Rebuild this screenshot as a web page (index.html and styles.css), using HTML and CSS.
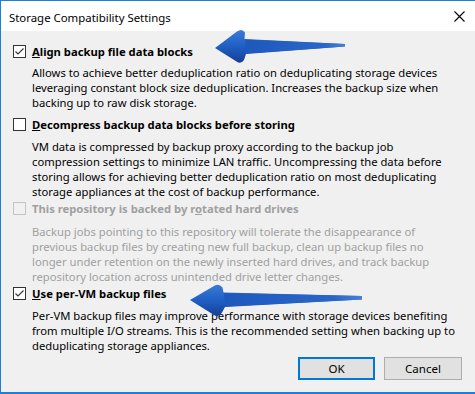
FILE: index.html
```html
<!DOCTYPE html>
<html>
<head>
<meta charset="utf-8">
<link rel="stylesheet" href="styles.css">
</head>
<body>
<div class="window">
  <div class="titlebar">
    <span class="title">Storage Compatibility Settings</span>
    <svg class="close" width="11" height="11" viewBox="0 0 11 11"><path d="M0.5 0.5L10.5 10.5M10.5 0.5L0.5 10.5" stroke="#000" stroke-width="1.1" fill="none"/></svg>
  </div>
  <div class="content">
    <div class="opt opt1">
      <div class="row">
        <span class="cb"><svg width="11" height="11" viewBox="0 0 11 11"><path d="M1.5 5.5L4 8L9.5 2.5" stroke="#333" stroke-width="1.1" fill="none"/></svg></span>
        <span class="label"><u>A</u>lign backup file data blocks</span>
      </div>
      <p class="desc">Allows to achieve better deduplication ratio on deduplicating storage devices<br>leveraging constant block size deduplication. Increases the backup size when<br>backing up to raw disk storage.</p>
    </div>
    <div class="opt opt2">
      <div class="row">
        <span class="cb"></span>
        <span class="label"><u>D</u>ecompress backup data blocks before storing</span>
      </div>
      <p class="desc">VM data is compressed by backup proxy according to the backup job<br>compression settings to minimize LAN traffic. Uncompressing the data before<br>storing allows for achieving better deduplication ratio on most deduplicating<br>storage appliances at the cost of backup performance.</p>
    </div>
    <div class="opt opt3 disabled">
      <div class="row">
        <span class="cb"></span>
        <span class="label">This repository is backed by r<u>o</u>tated hard drives</span>
      </div>
      <p class="desc">Backup jobs pointing to this repository will tolerate the disappearance of<br>previous backup files by creating new full backup, clean up backup files no<br>longer under retention on the newly inserted hard drives, and track backup<br>repository location across unintended drive letter changes.</p>
    </div>
    <div class="opt opt4">
      <div class="row">
        <span class="cb"><svg width="11" height="11" viewBox="0 0 11 11"><path d="M1.5 5.5L4 8L9.5 2.5" stroke="#333" stroke-width="1.1" fill="none"/></svg></span>
        <span class="label"><u>U</u>se per-VM backup files</span>
      </div>
      <p class="desc">Per-VM backup files may improve performance with storage devices benefiting<br>from multiple I/O streams. This is the recommended setting when backing up to<br>deduplicating storage appliances.</p>
    </div>
    <div class="buttons">
      <button class="btn btn-default">OK</button>
      <button class="btn">Cancel</button>
    </div>
  </div>
  <svg class="arrows" width="475" height="394" viewBox="0 0 475 394">
    <defs>
      <linearGradient id="g1" x1="0" y1="0" x2="0" y2="1">
        <stop offset="0" stop-color="#3b7ad6"/>
        <stop offset="0.5" stop-color="#1f5fc4"/>
        <stop offset="1" stop-color="#173f94"/>
      </linearGradient>
      <linearGradient id="g2" x1="0" y1="0" x2="1" y2="0">
        <stop offset="0" stop-color="#1e58bd" stop-opacity="1"/>
        <stop offset="0.8" stop-color="#2a66c8" stop-opacity="1"/>
        <stop offset="1" stop-color="#4f86d8" stop-opacity="0.8"/>
      </linearGradient>
    </defs>
    <path d="M215 48 L237 31.5 Q242 28 245 32.5 L244.5 39 L345 44 L345 46.5 L246 54 L244 60 Q241 64.5 236.5 61.5 Z" fill="url(#g1)"/>
    <path d="M245 39.5 L345 44 L345 46.5 L246 53.5 Z" fill="url(#g2)"/>
    <path d="M190 300 L214 286 Q219 283 222.5 287.5 L223.5 292.5 L362 296 L362 299.5 L225 307 L222 312.5 Q218.5 318 214 315 Z" fill="url(#g1)"/>
    <path d="M224 293 L362 296 L362 299.5 L225 306.5 Z" fill="url(#g2)"/>
  </svg>
</div>
</body>
</html>
```
FILE: styles.css
```css
* { box-sizing: border-box; }
html, body { margin: 0; padding: 0; }
body {
  width: 475px;
  height: 394px;
  overflow: hidden;
  font-family: "Noto Sans", "Open Sans", sans-serif;
  font-size: 11.25px;
  color: #000;
  background: #f0f0f0;
}
.window {
  position: relative;
  width: 475px;
  height: 394px;
  border-top: 1px solid #1a80d8;
  border-left: 1px solid #1a80d8;
  border-bottom: 2px solid #1a80d8;
  display: flex;
  flex-direction: column;
  background: #f0f0f0;
}
.titlebar {
  height: 30px;
  background: #fff;
  display: flex;
  align-items: center;
  justify-content: space-between;
  padding: 0 10px 0 8px;
  flex: none;
}
.title { font-size: 11.4px; line-height: 15px; padding-top: 2px; }
.close { margin-top: 0; }
.content {
  flex: 1;
  padding: 13px 13px 0 12px;
  display: flex;
  flex-direction: column;
}
.row {
  display: flex;
  align-items: center;
  gap: 6px;
  line-height: 15px;
  height: 15px;
}
.cb {
  width: 13px;
  height: 13px;
  border: 1px solid #333;
  background: #fff;
  display: flex;
  align-items: center;
  justify-content: center;
  flex: none;
}
.label { font-weight: bold; white-space: nowrap; }
.desc {
  margin: 6px 0 0 19px;
  line-height: 15px;
  white-space: nowrap;
}
.opt2 { margin-top: 7px; }
.opt2 .desc { margin-top: 7px; }
.opt3 { margin-top: 2px; }
.opt3 .desc { margin-top: 8px; }
.opt4 { margin-top: 2px; }
.opt4 .desc { margin-top: 7px; }
.disabled { color: #a0a0a0; }
.disabled .cb { border-color: #c4c4c4; background: #f0f0f0; }
.buttons {
  display: flex;
  justify-content: flex-end;
  gap: 9px;
  margin-top: 4px;
}
.btn {
  font-family: inherit;
  font-size: 11.5px;
  height: 23px;
  width: 78px;
  background: #e1e1e1;
  border: 1px solid #adadad;
  color: #000;
  padding: 0;
  line-height: 15px;
}
.btn-default { border: 2px solid #0078d7; width: 77px; }
.arrows { position: absolute; left: -1px; top: -1px; pointer-events: none; }
```
